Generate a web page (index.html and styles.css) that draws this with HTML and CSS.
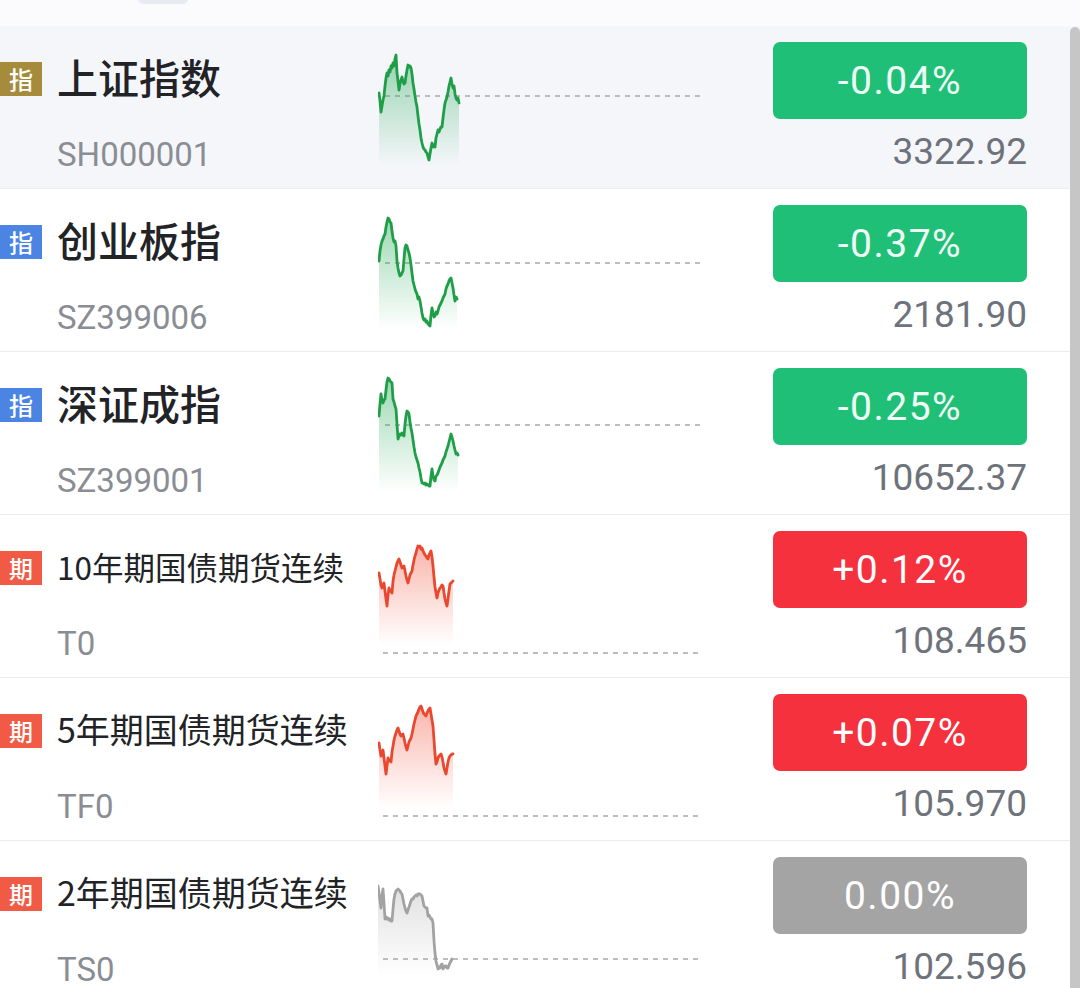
FILE: index.html
```html
<!DOCTYPE html>
<html lang="zh-CN">
<head>
<meta charset="utf-8">
<title>指数行情</title>
<link rel="stylesheet" href="styles.css">
</head>
<body>
<div class="screen">
  <svg class="defs" width="0" height="0" aria-hidden="true">
    <defs>
      <linearGradient id="gGreen" x1="0" y1="0" x2="0" y2="1">
        <stop offset="0" stop-color="#22a855" stop-opacity="0.45"/>
        <stop offset="1" stop-color="#22a855" stop-opacity="0"/>
      </linearGradient>
      <linearGradient id="gRed" x1="0" y1="0" x2="0" y2="1">
        <stop offset="0" stop-color="#f0503a" stop-opacity="0.42"/>
        <stop offset="1" stop-color="#f0503a" stop-opacity="0"/>
      </linearGradient>
      <linearGradient id="gGray" x1="0" y1="0" x2="0" y2="1">
        <stop offset="0" stop-color="#9a9a9a" stop-opacity="0.30"/>
        <stop offset="1" stop-color="#9a9a9a" stop-opacity="0"/>
      </linearGradient>
    </defs>
  </svg>

  <div class="topbar"><span class="blob"></span></div>

  <div class="list">
    <div class="row active">
      <div class="info">
        <div class="title"><span class="tag gold">指</span><span class="name">上证指数</span></div>
        <div class="code">SH000001</div>
      </div>
      <svg class="chart" viewBox="0 0 322 162" width="322" height="162">
        <line class="base" x1="7" y1="70" x2="322" y2="70"/>
        <path fill="url(#gGreen)" d="M1,67 L2,75 L3,86 L4,80 L5,74 L6,70 L7,60 L8,52 L9,47 L10,50 L11,44 L12,46 L13,40 L14,42 L15,37 L16,40 L17,33 L18,29 L19,47 L20,55 L21,64 L22,58 L23,54 L24,51 L25,55 L26,58 L27,57 L28,50 L29,44 L30,39 L31,41 L32,40 L33,42 L34,48 L35,57 L36,63 L37,70 L38,76 L39,81 L40,90 L41,98 L42,104 L43,112 L44,117 L45,121 L46,123 L47,124 L48,126 L49,127 L50,131 L51,134 L52,128 L53,122 L54,117 L55,121 L56,119 L57,121 L58,112 L59,108 L60,104 L61,106 L62,103 L63,101 L64,101 L65,92 L66,84 L67,77 L68,74 L69,71 L70,66 L71,60 L72,56 L73,52 L74,58 L75,62 L76,60 L77,68 L78,72 L79,74 L80,72 L81,77 L81,140 L1,140 Z"/>
        <path class="ln green" d="M1,67 L2,75 L3,86 L4,80 L5,74 L6,70 L7,60 L8,52 L9,47 L10,50 L11,44 L12,46 L13,40 L14,42 L15,37 L16,40 L17,33 L18,29 L19,47 L20,55 L21,64 L22,58 L23,54 L24,51 L25,55 L26,58 L27,57 L28,50 L29,44 L30,39 L31,41 L32,40 L33,42 L34,48 L35,57 L36,63 L37,70 L38,76 L39,81 L40,90 L41,98 L42,104 L43,112 L44,117 L45,121 L46,123 L47,124 L48,126 L49,127 L50,131 L51,134 L52,128 L53,122 L54,117 L55,121 L56,119 L57,121 L58,112 L59,108 L60,104 L61,106 L62,103 L63,101 L64,101 L65,92 L66,84 L67,77 L68,74 L69,71 L70,66 L71,60 L72,56 L73,52 L74,58 L75,62 L76,60 L77,68 L78,72 L79,74 L80,72 L81,77"/>
      </svg>
      <div class="quote">
        <div class="badge down">-0.04%</div>
        <div class="price">3322.92</div>
      </div>
    </div>

    <div class="row">
      <div class="info">
        <div class="title"><span class="tag blue">指</span><span class="name">创业板指</span></div>
        <div class="code">SZ399006</div>
      </div>
      <svg class="chart" viewBox="0 0 322 162" width="322" height="162">
        <line class="base" x1="7" y1="74" x2="322" y2="74"/>
        <path fill="url(#gGreen)" d="M1,72 L2,62 L3,56 L4,52 L5,50 L6,47 L7,45 L8,38 L9,33 L10,29 L11,30 L12,33 L13,34 L14,42 L15,49 L16,53 L17,52 L18,57 L19,72 L20,79 L21,84 L22,87 L23,86 L24,84 L25,82 L26,70 L27,59 L28,56 L29,57 L30,61 L31,64 L32,69 L33,76 L34,84 L35,92 L36,96 L37,100 L38,103 L39,105 L40,110 L41,108 L42,112 L43,118 L44,124 L45,129 L46,131 L47,130 L48,133 L49,132 L50,135 L51,136 L52,137 L53,126 L54,119 L55,124 L56,128 L57,127 L58,123 L59,125 L60,122 L61,118 L62,116 L63,114 L64,112 L65,109 L66,107 L67,105 L68,100 L69,97 L70,95 L71,92 L72,90 L73,89 L74,94 L75,99 L76,106 L77,112 L78,108 L79,110 L79,140 L1,140 Z"/>
        <path class="ln green" d="M1,72 L2,62 L3,56 L4,52 L5,50 L6,47 L7,45 L8,38 L9,33 L10,29 L11,30 L12,33 L13,34 L14,42 L15,49 L16,53 L17,52 L18,57 L19,72 L20,79 L21,84 L22,87 L23,86 L24,84 L25,82 L26,70 L27,59 L28,56 L29,57 L30,61 L31,64 L32,69 L33,76 L34,84 L35,92 L36,96 L37,100 L38,103 L39,105 L40,110 L41,108 L42,112 L43,118 L44,124 L45,129 L46,131 L47,130 L48,133 L49,132 L50,135 L51,136 L52,137 L53,126 L54,119 L55,124 L56,128 L57,127 L58,123 L59,125 L60,122 L61,118 L62,116 L63,114 L64,112 L65,109 L66,107 L67,105 L68,100 L69,97 L70,95 L71,92 L72,90 L73,89 L74,94 L75,99 L76,106 L77,112 L78,108 L79,110"/>
      </svg>
      <div class="quote">
        <div class="badge down">-0.37%</div>
        <div class="price">2181.90</div>
      </div>
    </div>

    <div class="row">
      <div class="info">
        <div class="title"><span class="tag blue">指</span><span class="name">深证成指</span></div>
        <div class="code">SZ399001</div>
      </div>
      <svg class="chart" viewBox="0 0 322 162" width="322" height="162">
        <line class="base" x1="7" y1="73" x2="322" y2="73"/>
        <path fill="url(#gGreen)" d="M1,64 L2,52 L3,42 L4,48 L5,51 L6,48 L7,47 L8,38 L9,30 L10,26 L11,27 L12,29 L13,30 L14,31 L15,47 L16,50 L17,54 L18,57 L19,72 L20,87 L21,84 L22,82 L23,83 L24,81 L25,83 L26,84 L27,72 L28,64 L29,59 L30,60 L31,62 L32,70 L33,76 L34,81 L35,88 L36,95 L37,101 L38,105 L39,108 L40,111 L41,116 L42,120 L43,126 L44,131 L45,131 L46,132 L47,131 L48,133 L49,132 L50,133 L51,134 L52,134 L53,124 L54,117 L55,124 L56,128 L57,129 L58,124 L59,123 L60,121 L61,118 L62,115 L63,113 L64,111 L65,108 L66,106 L67,104 L68,100 L69,97 L70,94 L71,90 L72,86 L73,82 L74,85 L75,89 L76,94 L77,98 L78,102 L79,101 L80,103 L80,140 L1,140 Z"/>
        <path class="ln green" d="M1,64 L2,52 L3,42 L4,48 L5,51 L6,48 L7,47 L8,38 L9,30 L10,26 L11,27 L12,29 L13,30 L14,31 L15,47 L16,50 L17,54 L18,57 L19,72 L20,87 L21,84 L22,82 L23,83 L24,81 L25,83 L26,84 L27,72 L28,64 L29,59 L30,60 L31,62 L32,70 L33,76 L34,81 L35,88 L36,95 L37,101 L38,105 L39,108 L40,111 L41,116 L42,120 L43,126 L44,131 L45,131 L46,132 L47,131 L48,133 L49,132 L50,133 L51,134 L52,134 L53,124 L54,117 L55,124 L56,128 L57,129 L58,124 L59,123 L60,121 L61,118 L62,115 L63,113 L64,111 L65,108 L66,106 L67,104 L68,100 L69,97 L70,94 L71,90 L72,86 L73,82 L74,85 L75,89 L76,94 L77,98 L78,102 L79,101 L80,103"/>
      </svg>
      <div class="quote">
        <div class="badge down">-0.25%</div>
        <div class="price">10652.37</div>
      </div>
    </div>

    <div class="row">
      <div class="info">
        <div class="title"><span class="tag red">期</span><span class="name small tight">10年期国债期货连续</span></div>
        <div class="code">T0</div>
      </div>
      <svg class="chart" viewBox="0 0 322 162" width="322" height="162">
        <line class="base" x1="5" y1="138" x2="322" y2="138"/>
        <path fill="url(#gRed)" d="M1,58 L2,64 L3,70 L4,73 L5,70 L6,68 L7,76 L8,84 L9,91 L10,80 L11,73 L12,76 L13,76 L14,78 L15,66 L16,60 L17,56 L18,52 L19,48 L20,46 L21,44 L22,47 L23,50 L24,53 L25,52 L26,51 L27,56 L28,61 L29,65 L30,68 L31,64 L32,60 L33,58 L34,56 L35,50 L36,45 L37,41 L38,38 L39,34 L40,31 L41,32 L42,31 L43,34 L44,33 L45,36 L46,38 L47,40 L48,41 L49,43 L50,44 L51,40 L52,38 L53,36 L54,42 L55,51 L56,62 L57,72 L58,78 L59,83 L60,78 L61,75 L62,73 L63,72 L64,70 L65,71 L66,78 L67,84 L68,88 L69,91 L70,84 L71,76 L72,69 L73,68 L74,67 L75,66 L75,130 L1,130 Z"/>
        <path class="ln red" d="M1,58 L2,64 L3,70 L4,73 L5,70 L6,68 L7,76 L8,84 L9,91 L10,80 L11,73 L12,76 L13,76 L14,78 L15,66 L16,60 L17,56 L18,52 L19,48 L20,46 L21,44 L22,47 L23,50 L24,53 L25,52 L26,51 L27,56 L28,61 L29,65 L30,68 L31,64 L32,60 L33,58 L34,56 L35,50 L36,45 L37,41 L38,38 L39,34 L40,31 L41,32 L42,31 L43,34 L44,33 L45,36 L46,38 L47,40 L48,41 L49,43 L50,44 L51,40 L52,38 L53,36 L54,42 L55,51 L56,62 L57,72 L58,78 L59,83 L60,78 L61,75 L62,73 L63,72 L64,70 L65,71 L66,78 L67,84 L68,88 L69,91 L70,84 L71,76 L72,69 L73,68 L74,67 L75,66"/>
      </svg>
      <div class="quote">
        <div class="badge up">+0.12%</div>
        <div class="price">108.465</div>
      </div>
    </div>

    <div class="row">
      <div class="info">
        <div class="title"><span class="tag red">期</span><span class="name small">5年期国债期货连续</span></div>
        <div class="code">TF0</div>
      </div>
      <svg class="chart" viewBox="0 0 322 162" width="322" height="162">
        <line class="base" x1="5" y1="138" x2="322" y2="138"/>
        <path fill="url(#gRed)" d="M1,65 L2,72 L3,78 L4,75 L5,72 L6,80 L7,88 L8,96 L9,88 L10,80 L11,82 L12,83 L13,84 L14,74 L15,68 L16,62 L17,58 L18,55 L19,52 L20,50 L21,53 L22,56 L23,58 L24,57 L25,56 L26,60 L27,65 L28,69 L29,72 L30,68 L31,64 L32,62 L33,60 L34,56 L35,51 L36,46 L37,42 L38,38 L39,36 L40,34 L41,31 L42,29 L43,28 L44,31 L45,34 L46,36 L47,37 L48,38 L49,35 L50,33 L51,31 L52,30 L53,36 L54,42 L55,48 L56,62 L57,76 L58,86 L59,84 L60,80 L61,78 L62,77 L63,76 L64,79 L65,84 L66,90 L67,93 L68,96 L69,90 L70,84 L71,80 L72,78 L73,77 L74,76 L75,76 L75,130 L1,130 Z"/>
        <path class="ln red" d="M1,65 L2,72 L3,78 L4,75 L5,72 L6,80 L7,88 L8,96 L9,88 L10,80 L11,82 L12,83 L13,84 L14,74 L15,68 L16,62 L17,58 L18,55 L19,52 L20,50 L21,53 L22,56 L23,58 L24,57 L25,56 L26,60 L27,65 L28,69 L29,72 L30,68 L31,64 L32,62 L33,60 L34,56 L35,51 L36,46 L37,42 L38,38 L39,36 L40,34 L41,31 L42,29 L43,28 L44,31 L45,34 L46,36 L47,37 L48,38 L49,35 L50,33 L51,31 L52,30 L53,36 L54,42 L55,48 L56,62 L57,76 L58,86 L59,84 L60,80 L61,78 L62,77 L63,76 L64,79 L65,84 L66,90 L67,93 L68,96 L69,90 L70,84 L71,80 L72,78 L73,77 L74,76 L75,76"/>
      </svg>
      <div class="quote">
        <div class="badge up">+0.07%</div>
        <div class="price">105.970</div>
      </div>
    </div>

    <div class="row">
      <div class="info">
        <div class="title"><span class="tag red">期</span><span class="name small">2年期国债期货连续</span></div>
        <div class="code">TS0</div>
      </div>
      <svg class="chart" viewBox="0 0 322 162" width="322" height="162">
        <line class="base" x1="5" y1="118" x2="322" y2="118"/>
        <path fill="url(#gGray)" d="M0,45 L1,52 L2,60 L3,67 L4,55 L5,48 L6,62 L7,78 L8,76 L9,78 L10,77 L11,79 L12,78 L13,80 L14,80 L15,68 L16,58 L17,53 L18,50 L19,49 L20,48 L21,49 L22,50 L23,52 L24,53 L25,58 L26,63 L27,67 L28,70 L29,72 L30,69 L31,66 L32,63 L33,60 L34,58 L35,58 L36,56 L37,55 L38,54 L39,55 L40,53 L41,53 L42,53 L43,54 L44,55 L45,60 L46,65 L47,66 L48,67 L49,67 L50,75 L51,74 L52,76 L53,78 L54,78 L55,82 L56,100 L57,112 L58,120 L59,124 L60,128 L61,126 L62,127 L63,124 L64,123 L65,128 L66,126 L67,125 L68,125 L69,127 L70,127 L71,124 L72,122 L73,120 L74,118 L74,135 L0,135 Z"/>
        <path class="ln gray" d="M0,45 L1,52 L2,60 L3,67 L4,55 L5,48 L6,62 L7,78 L8,76 L9,78 L10,77 L11,79 L12,78 L13,80 L14,80 L15,68 L16,58 L17,53 L18,50 L19,49 L20,48 L21,49 L22,50 L23,52 L24,53 L25,58 L26,63 L27,67 L28,70 L29,72 L30,69 L31,66 L32,63 L33,60 L34,58 L35,58 L36,56 L37,55 L38,54 L39,55 L40,53 L41,53 L42,53 L43,54 L44,55 L45,60 L46,65 L47,66 L48,67 L49,67 L50,75 L51,74 L52,76 L53,78 L54,78 L55,82 L56,100 L57,112 L58,120 L59,124 L60,128 L61,126 L62,127 L63,124 L64,123 L65,128 L66,126 L67,125 L68,125 L69,127 L70,127 L71,124 L72,122 L73,120 L74,118"/>
      </svg>
      <div class="quote">
        <div class="badge flat">0.00%</div>
        <div class="price">102.596</div>
      </div>
    </div>
  </div>

  <div class="scrollbar"></div>
</div>
</body>
</html>
```

FILE: styles.css
```css
html, body {
  margin: 0;
  padding: 0;
  background: #ffffff;
}

body {
  font-family: Roboto, "Noto Sans CJK SC", sans-serif;
}

.screen {
  position: relative;
  width: 1080px;
  height: 988px;
  overflow: hidden;
  background: #ffffff;
}

.defs {
  position: absolute;
  width: 0;
  height: 0;
}

.topbar {
  position: relative;
  height: 26px;
  background: #fbfbfd;
}

.blob {
  position: absolute;
  left: 138px;
  top: -6px;
  width: 50px;
  height: 10px;
  border-radius: 5px;
  background: #e9ebf2;
}

.list {
  display: flex;
  flex-direction: column;
}

.row {
  display: grid;
  grid-template-columns: 378px 322px 1fr;
  height: 162px;
  border-bottom: 1px solid #ededf0;
  background: #ffffff;
}

.row.active {
  background: #f5f6fa;
}

.info {
  display: flex;
  flex-direction: column;
  padding-top: 36px;
}

.title {
  display: flex;
  align-items: center;
  gap: 15px;
  height: 34px;
}

.tag {
  flex: none;
  width: 42px;
  height: 34px;
  display: flex;
  align-items: center;
  justify-content: center;
  color: #ffffff;
  font-family: "Noto Sans CJK SC", sans-serif;
  font-size: 24px;
  font-weight: 500;
  line-height: 34px;
}

.tag.gold { background: #a78b3c; }
.tag.blue { background: #4c84e4; }
.tag.red { background: #f15b45; }

.name {
  font-family: "Noto Sans CJK SC", sans-serif;
  font-size: 41px;
  font-weight: 500;
  line-height: 34px;
  margin-bottom: 6px;
  color: #222326;
  white-space: nowrap;
}

.name.small {
  font-size: 34px;
  font-weight: 400;
  margin-bottom: 4px;
}

.name.tight {
  font-size: 31.5px;
}

.code {
  margin-top: 43px;
  padding-left: 57px;
  font-size: 33px;
  line-height: 32px;
  color: #8a8d94;
}

.chart {
  display: block;
  width: 322px;
  height: 162px;
}

.chart .base {
  stroke: #a9a9ad;
  stroke-width: 1.6;
  stroke-dasharray: 5 5;
}

.chart .ln {
  fill: none;
  stroke-width: 2.8;
  stroke-linejoin: round;
  stroke-linecap: round;
}

.chart .ln.green { stroke: #1f9e48; }
.chart .ln.red { stroke: #e9482f; }
.chart .ln.gray { stroke: #a2a2a2; }

.quote {
  display: flex;
  flex-direction: column;
  align-items: flex-end;
  padding: 16px 53px 0 0;
}

.badge {
  width: 254px;
  height: 77px;
  border-radius: 7px;
  display: flex;
  align-items: center;
  justify-content: center;
  color: #ffffff;
  font-size: 39px;
  letter-spacing: 1.5px;
}

.badge.down { background: #20bf77; color: #effff6; }
.badge.up { background: #f5313e; }
.badge.flat { background: #a4a4a4; }

.price {
  margin-top: 14px;
  font-size: 37px;
  line-height: 37px;
  color: #6e727b;
}

.scrollbar {
  position: absolute;
  top: 27px;
  right: 0;
  bottom: 0;
  width: 10px;
  border-radius: 5px 5px 0 0;
  background: #c6c6c6;
}
```
